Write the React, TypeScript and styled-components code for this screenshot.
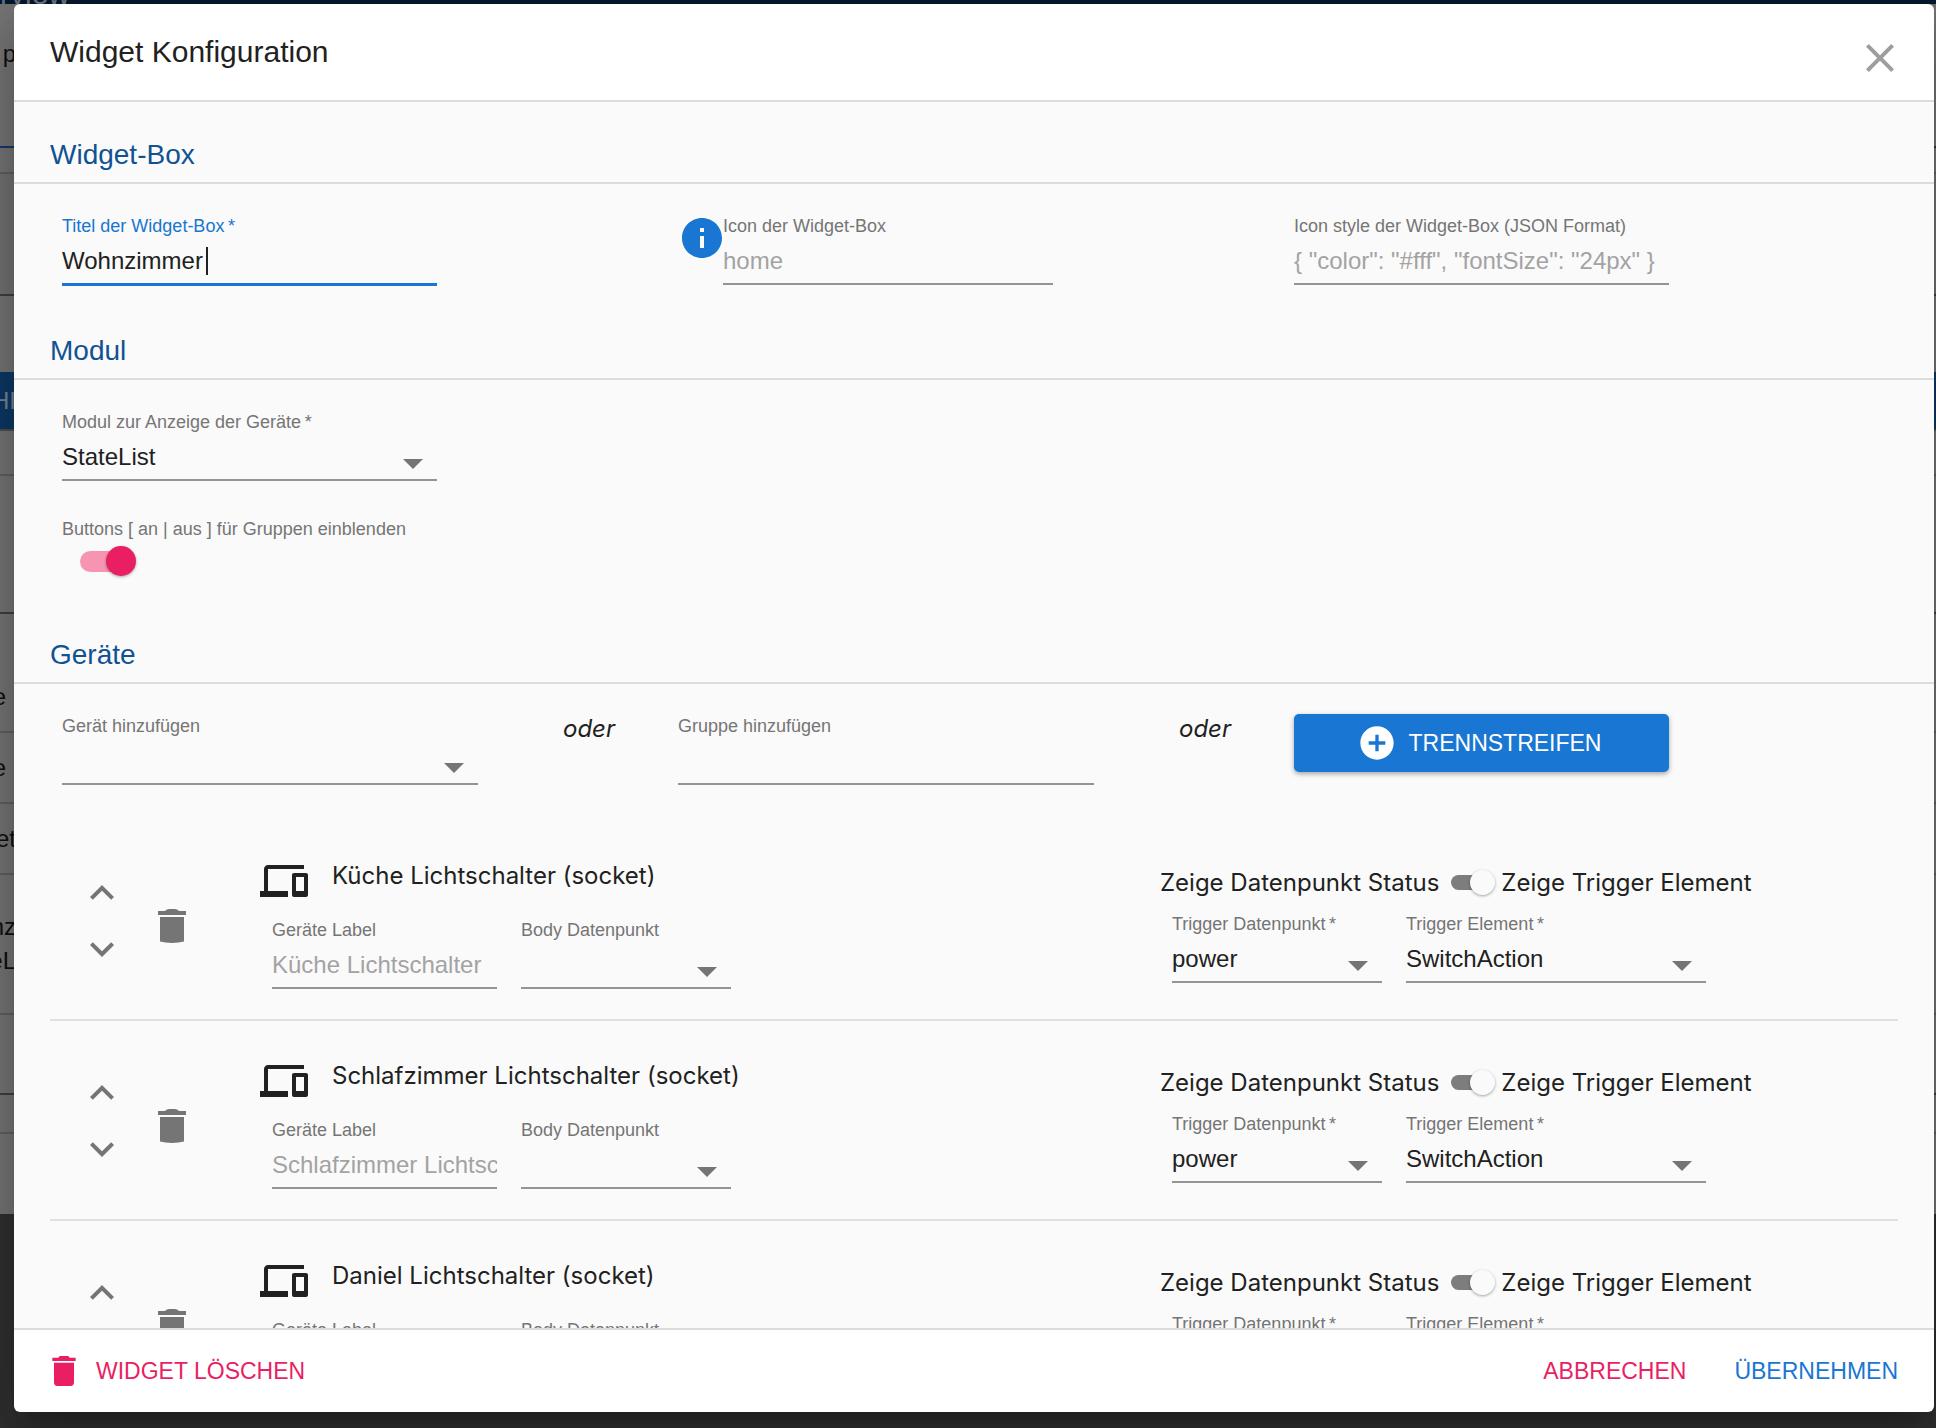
import React, { useState } from 'react';
import styled, { createGlobalStyle, css } from 'styled-components';

const color = {
  primary: '#1976d2',
  primaryDark: '#115293',
  secondary: '#e91e63',
  text: '#212121',
  muted: '#757575',
  hint: '#a3a3a3',
  underline: '#949494',
  divider: '#dcdcdc',
  surface: '#fafafa',
};

const sans = `"Liberation Sans", Arial, sans-serif`;
const bodyFont = `Inter, "Liberation Sans", sans-serif`;

const GlobalStyle = createGlobalStyle`
  *, *::before, *::after { box-sizing: border-box; }
  body { margin: 0; background: #303030; font-family: ${sans}; color: ${color.text}; }
  button, input, select { font: inherit; color: inherit; margin: 0; }
`;

/* ---------- page behind the dialog ---------- */

const Page = styled.div`
  position: relative;
  height: 100vh;
  overflow: hidden;
`;

const Backdrop = styled.div`
  position: absolute;
  inset: 0;
  overflow: hidden;
`;

const AppBar = styled.div`
  display: flex;
  align-items: flex-end;
  height: 4px;
  background: #07182f;
  color: #6b7480;
  font-size: 30px;
  line-height: 20px;
`;

const BackRow = styled.div<{ $h: number; $line?: string; $bg?: string; $ink?: string }>`
  display: flex;
  align-items: center;
  height: ${(p) => p.$h}px;
  border-bottom: 2px solid ${(p) => p.$line ?? 'transparent'};
  background: ${(p) => p.$bg ?? '#757575'};
  background-clip: ${(p) => (p.$line ? 'padding-box' : 'border-box')};
  color: ${(p) => p.$ink ?? '#101010'};
  font-size: 24px;
`;

const BackText = styled.span<{ $cut?: boolean }>`
  display: flex;
  flex-direction: column;
  align-items: flex-end;
  line-height: 34px;
  width: ${(p) => (p.$cut ? 16 : 6)}px;
`;

/* ---------- dialog frame ---------- */

const Overlay = styled.div`
  position: relative;
  height: 100%;
  padding: 4px 2px 16px 14px;
  display: flex;
`;

const Dialog = styled.section`
  flex: 1;
  min-width: 0;
  display: flex;
  flex-direction: column;
  background: #fff;
  border-radius: 6px;
  overflow: hidden;
  box-shadow: 0 16px 22px -10px rgba(0, 0, 0, 0.2), 0 36px 57px 4px rgba(0, 0, 0, 0.14),
    0 14px 69px 12px rgba(0, 0, 0, 0.12);
`;

const Header = styled.header`
  display: flex;
  justify-content: space-between;
  align-items: center;
  height: 98px;
  flex: none;
  padding: 12px 30px 0 36px;
  border-bottom: 2px solid ${color.divider};
`;

const Title = styled.h1`
  margin: 0 0 12px;
  font-size: 30px;
  line-height: 40px;
  font-weight: 400;
`;

const Body = styled.div`
  flex: 1;
  min-height: 0;
  overflow-y: auto;
  scrollbar-width: none;
  background: ${color.surface};
`;

const Footer = styled.footer`
  display: flex;
  justify-content: space-between;
  align-items: center;
  height: 84px;
  flex: none;
  padding: 0 36px 0 30px;
  border-top: 2px solid ${color.divider};
`;

const FooterActions = styled.div`
  display: flex;
  gap: 48px;
`;

const bareButton = css`
  padding: 0;
  border: 0;
  background: none;
  cursor: pointer;
`;

const TextButton = styled.button<{ $tone: string }>`
  ${bareButton}
  display: flex;
  align-items: center;
  gap: 12px;
  color: ${(p) => p.$tone};
  font-size: 23px;
  line-height: 40px;
`;

const IconButton = styled.button`
  ${bareButton}
  display: flex;
  color: ${color.muted};
`;

const CloseButton = styled(IconButton)`
  color: #9e9e9e;
`;

const DeleteButton = styled(IconButton)`
  padding-top: 12px;
`;

/* ---------- sections and fields ---------- */

const SectionTitle = styled.h2`
  margin: 0;
  padding: 33px 36px 7px;
  border-bottom: 2px solid ${color.divider};
  color: ${color.primaryDark};
  font-size: 28px;
  line-height: 40px;
  font-weight: 400;
`;

const Grid = styled.div<{ $cols: string }>`
  display: grid;
  grid-template-columns: ${(p) => p.$cols};
  padding: 30px 36px 12px;
`;

const Cell = styled.div`
  display: flex;
  align-items: flex-start;
  padding: 0 12px;
  min-width: 0;
`;

const Stack = styled.div`
  display: flex;
  flex-direction: column;
  align-items: flex-start;
  gap: 36px;
  padding: 30px 48px 26px;
`;

const FieldBox = styled.div<{ $width: string; $focus?: boolean }>`
  width: ${(p) => p.$width};
  color: ${(p) => (p.$focus ? color.primary : color.muted)};
`;

const Label = styled.label`
  display: block;
  font-size: 18px;
  line-height: 24px;
  white-space: nowrap;
`;

const Control = styled.div`
  position: relative;
  color: ${color.text};
`;

const controlStyle = css`
  display: block;
  width: 100%;
  height: 47px;
  padding: 0;
  border: 0;
  border-bottom: 2px solid ${color.underline};
  border-radius: 0;
  outline: 0;
  background: none;
  font-size: 24px;
`;

const Input = styled.input<{ $focus?: boolean }>`
  ${controlStyle}
  ${(p) =>
    p.$focus &&
    css`
      height: 48px;
      border-bottom: 3px solid ${color.primary};
      caret-color: transparent;
    `}
  &::placeholder {
    color: ${color.hint};
    opacity: 1;
  }
`;

const Caret = styled.span`
  position: absolute;
  left: 144px;
  top: 9px;
  width: 2px;
  height: 28px;
  background: ${color.text};
`;

const Select = styled.select`
  ${controlStyle}
  appearance: none;
`;

const Arrow = styled.svg`
  position: absolute;
  right: 14px;
  bottom: 12px;
  width: 20px;
  height: 10px;
  fill: ${color.muted};
  pointer-events: none;
`;

const InfoBadge = styled.span`
  flex: none;
  display: flex;
  padding: 4px 1px 0 4px;
  color: ${color.primary};
`;

const SwitchBlock = styled.div`
  display: flex;
  flex-direction: column;
  gap: 5px;
  color: ${color.muted};
`;

const Switch = styled.input<{ $large?: boolean }>`
  appearance: none;
  position: relative;
  flex: none;
  cursor: pointer;
  width: ${(p) => (p.$large ? 56 : 44)}px;
  height: ${(p) => (p.$large ? 30 : 25)}px;
  margin: 0 0 0 ${(p) => (p.$large ? 18 : 0)}px;

  &::before {
    content: '';
    position: absolute;
    left: 0;
    top: 5px;
    width: ${(p) => (p.$large ? 51 : 39)}px;
    height: ${(p) => (p.$large ? 21 : 15)}px;
    border-radius: 11px;
    background: ${(p) => (p.$large ? '#f794b1' : '#7d7d7d')};
  }
  &::after {
    content: '';
    position: absolute;
    left: 0;
    top: 0;
    width: ${(p) => (p.$large ? 30 : 25)}px;
    height: ${(p) => (p.$large ? 30 : 25)}px;
    border-radius: 50%;
    background: ${(p) => (p.$large ? color.secondary : '#fafafa')};
    box-shadow: 0 1px 3px rgba(0, 0, 0, 0.35);
  }
  &:checked::after {
    left: auto;
    right: 0;
  }
`;

const Or = styled.em`
  font-family: ${bodyFont};
  font-size: 24px;
  line-height: 30px;
  text-align: center;
`;

const AddButton = styled.button`
  display: flex;
  justify-content: center;
  align-items: center;
  gap: 12px;
  width: 375px;
  height: 58px;
  padding: 0 5px 0 0;
  border: 0;
  border-radius: 5px;
  background: ${color.primary};
  color: #fff;
  font-size: 23px;
  cursor: pointer;
  box-shadow: 0 2px 5px rgba(0, 0, 0, 0.35);
`;

/* ---------- device rows ---------- */

const DeviceList = styled.ul`
  list-style: none;
  margin: 0;
  padding: 24px 36px 0;
`;

const DeviceItem = styled.li`
  display: grid;
  grid-template-columns: 210px 900fr 738fr;
  height: 200px;
  padding-top: 36px;
  border-bottom: 2px solid #e0e0e0;
`;

const RowTools = styled.div`
  display: flex;
  align-items: center;
  gap: 22px;
  height: 128px;
  padding-left: 28px;
`;

const Arrows = styled.div`
  display: flex;
  flex-direction: column;
  gap: 8px;
`;

const DeviceName = styled.div`
  display: flex;
  gap: 24px;
  height: 48px;
  margin-bottom: 13px;
  font-family: ${bodyFont};
  font-size: 24px;
  line-height: 38px;
  white-space: nowrap;
`;

const ModeRow = styled.div`
  display: flex;
  align-items: center;
  gap: 6px;
  height: 50px;
  margin-bottom: 5px;
  font-family: ${bodyFont};
  font-size: 24px;
  white-space: nowrap;
`;

const ModeLabel = styled.label`
  padding-right: 6px;
`;

const Fields = styled.div`
  display: flex;
  gap: 24px;
  padding-left: 12px;
`;

/* ---------- icons ---------- */

const paths = {
  close: 'M19 6.41L17.59 5 12 10.59 6.41 5 5 6.41 10.59 12 5 17.59 6.41 19 12 13.41 17.59 19 19 17.59 13.41 12z',
  up: 'M12 8l-6 6 1.41 1.41L12 10.83l4.59 4.58L18 14z',
  down: 'M16.59 8.59L12 13.17 7.41 8.59 6 10l6 6 6-6z',
  trash: 'M6 19c0 1.1.9 2 2 2h8c1.1 0 2-.9 2-2V7H6v12zM19 4h-3.5l-1-1h-5l-1 1H5v2h14V4z',
  bin: 'M6 19.3Q8.5 20 12 20T18 19.3V7H6zM19 4h-3.4Q14.5 3 13.5 3h-3Q9.5 3 8.4 4H5v2h14z',
  devices:
    'M4 6h18V4H4c-1.1 0-2 .9-2 2v11H0v3h14v-3H4V6zm19 2h-6c-.55 0-1 .45-1 1v10c0 .55.45 1 1 1h6c.55 0 1-.45 1-1V9c0-.55-.45-1-1-1zm-1 9h-4v-7h4v7z',
  info: 'M12 2C6.48 2 2 6.48 2 12s4.48 10 10 10 10-4.48 10-10S17.52 2 12 2zm1 15h-2v-6h2v6zm0-8h-2V7h2v2z',
  add: 'M12 2C6.48 2 2 6.48 2 12s4.48 10 10 10 10-4.48 10-10S17.52 2 12 2zm5 11h-4v4h-2v-4H7v-2h4V7h2v4h4v2z',
};

function Icon({ name, size = 48, box = '0 0 24 24' }: { name: keyof typeof paths; size?: number; box?: string }) {
  return (
    <svg width={size} height={size} viewBox={box} fill="currentColor" aria-hidden="true">
      <path d={paths[name]} />
    </svg>
  );
}

/* ---------- composed fields ---------- */

type FieldProps = {
  id: string;
  label: string;
  width: string;
  required?: boolean;
  value?: string;
  placeholder?: string;
  focus?: boolean;
};

function FieldLabel({ id, label, required }: Pick<FieldProps, 'id' | 'label' | 'required'>) {
  return (
    <Label htmlFor={id}>
      {label}
      {required && '\u2009*'}
    </Label>
  );
}

function TextField({ id, label, width, required, value = '', placeholder, focus }: FieldProps) {
  return (
    <FieldBox $width={width} $focus={focus}>
      <FieldLabel id={id} label={label} required={required} />
      <Control>
        <Input id={id} type="text" defaultValue={value} placeholder={placeholder} $focus={focus} />
        {focus && <Caret />}
      </Control>
    </FieldBox>
  );
}

function SelectField({ id, label, width, required, value = '' }: FieldProps) {
  return (
    <FieldBox $width={width}>
      <FieldLabel id={id} label={label} required={required} />
      <Control>
        <Select id={id} defaultValue={value}>
          <option value={value}>{value}</option>
        </Select>
        <Arrow viewBox="0 0 20 10" aria-hidden="true">
          <path d="M0 0h20L10 10z" />
        </Arrow>
      </Control>
    </FieldBox>
  );
}

function DeviceRow({ name, index }: { name: string; index: number }) {
  const [showTrigger, setShowTrigger] = useState(true);
  const id = `device-${index}`;
  return (
    <DeviceItem>
      <RowTools>
        <Arrows>
          <IconButton type="button" aria-label="Nach oben"><Icon name="up" /></IconButton>
          <IconButton type="button" aria-label="Nach unten"><Icon name="down" /></IconButton>
        </Arrows>
        <DeleteButton type="button" aria-label="Löschen"><Icon name="bin" /></DeleteButton>
      </RowTools>
      <div>
        <DeviceName>
          <Icon name="devices" />
          <span>{name} (socket)</span>
        </DeviceName>
        <Fields>
          <TextField id={`${id}-label`} label="Geräte Label" width="225px" placeholder={name} />
          <SelectField id={`${id}-body`} label="Body Datenpunkt" width="210px" />
        </Fields>
      </div>
      <div>
        <ModeRow>
          <ModeLabel htmlFor={`${id}-mode`}>Zeige Datenpunkt Status</ModeLabel>
          <Switch
            id={`${id}-mode`}
            type="checkbox"
            checked={showTrigger}
            onChange={(e) => setShowTrigger(e.target.checked)}
          />
          <label htmlFor={`${id}-mode`}>Zeige Trigger Element</label>
        </ModeRow>
        <Fields>
          <SelectField id={`${id}-point`} label="Trigger Datenpunkt" width="210px" required value="power" />
          <SelectField id={`${id}-element`} label="Trigger Element" width="300px" required value="SwitchAction" />
        </Fields>
      </div>
    </DeviceItem>
  );
}

const devices = ['Küche Lichtschalter', 'Schlafzimmer Lichtschalter', 'Daniel Lichtschalter'];

function Background() {
  return (
    <Backdrop aria-hidden="true">
      <AppBar>rview</AppBar>
      <BackRow $h={102}><BackText $cut>p</BackText></BackRow>
      <BackRow $h={42} $line="#123a69" />
      <BackRow $h={26} $line="#5f5f5f" />
      <BackRow $h={122} $line="#3f3f3f" $bg="#727272" />
      <BackRow $h={76} />
      <BackRow $h={59} $line="#4f4f4f" $bg="#0d3866" $ink="#7a8796"><BackText $cut>HI</BackText></BackRow>
      <BackRow $h={45} $line="#5f5f5f" />
      <BackRow $h={138} $line="#3f3f3f" />
      <BackRow $h={49} />
      <BackRow $h={70} $line="#5f5f5f"><BackText>e</BackText></BackRow>
      <BackRow $h={71} $line="#5f5f5f"><BackText>e</BackText></BackRow>
      <BackRow $h={71} $line="#5f5f5f"><BackText $cut>et</BackText></BackRow>
      <BackRow $h={140} $line="#5f5f5f"><BackText $cut><span>nz</span><span>eL</span></BackText></BackRow>
      <BackRow $h={80} $line="#3f3f3f" />
      <BackRow $h={39} $line="#5f5f5f" />
      <BackRow $h={80} />
    </Backdrop>
  );
}

export default function App() {
  const [groupButtons, setGroupButtons] = useState(true);
  return (
    <Page>
      <GlobalStyle />
      <Background />
      <Overlay>
        <Dialog role="dialog" aria-labelledby="dialog-title">
          <Header>
            <Title id="dialog-title">Widget Konfiguration</Title>
            <CloseButton type="button" aria-label="Schließen"><Icon name="close" /></CloseButton>
          </Header>

          <Body>
            <SectionTitle>Widget-Box</SectionTitle>
            <Grid $cols="repeat(3, 1fr)">
              <Cell>
                <TextField id="title" label="Titel der Widget-Box" width="375px" required value="Wohnzimmer" focus />
              </Cell>
              <Cell>
                <InfoBadge><Icon name="info" size={40} box="2 2 20 20" /></InfoBadge>
                <TextField id="icon" label="Icon der Widget-Box" width="330px" placeholder="home" />
              </Cell>
              <Cell>
                <TextField
                  id="icon-style"
                  label="Icon style der Widget-Box (JSON Format)"
                  width="375px"
                  placeholder={'{ "color": "#fff", "fontSize": "24px" }'}
                />
              </Cell>
            </Grid>

            <SectionTitle>Modul</SectionTitle>
            <Stack>
              <SelectField id="module" label="Modul zur Anzeige der Geräte" width="375px" required value="StateList" />
              <SwitchBlock>
                <Label htmlFor="group-buttons">Buttons [ an | aus ] für Gruppen einblenden</Label>
                <Switch
                  $large
                  id="group-buttons"
                  type="checkbox"
                  checked={groupButtons}
                  onChange={(e) => setGroupButtons(e.target.checked)}
                />
              </SwitchBlock>
            </Stack>

            <SectionTitle>Geräte</SectionTitle>
            <Grid $cols="3fr 1fr 3fr 1fr 4fr">
              <Cell><SelectField id="add-device" label="Gerät hinzufügen" width="95%" /></Cell>
              <Or>oder</Or>
              <Cell><TextField id="add-group" label="Gruppe hinzufügen" width="95%" /></Cell>
              <Or>oder</Or>
              <Cell>
                <AddButton type="button"><Icon name="add" size={40} />TRENNSTREIFEN</AddButton>
              </Cell>
            </Grid>

            <DeviceList>
              {devices.map((name, i) => (
                <DeviceRow key={name} name={name} index={i} />
              ))}
            </DeviceList>
          </Body>

          <Footer>
            <TextButton type="button" $tone={color.secondary}>
              <Icon name="trash" size={40} />
              WIDGET LÖSCHEN
            </TextButton>
            <FooterActions>
              <TextButton type="button" $tone={color.secondary}>ABBRECHEN</TextButton>
              <TextButton type="button" $tone={color.primary}>ÜBERNEHMEN</TextButton>
            </FooterActions>
          </Footer>
        </Dialog>
      </Overlay>
    </Page>
  );
}
